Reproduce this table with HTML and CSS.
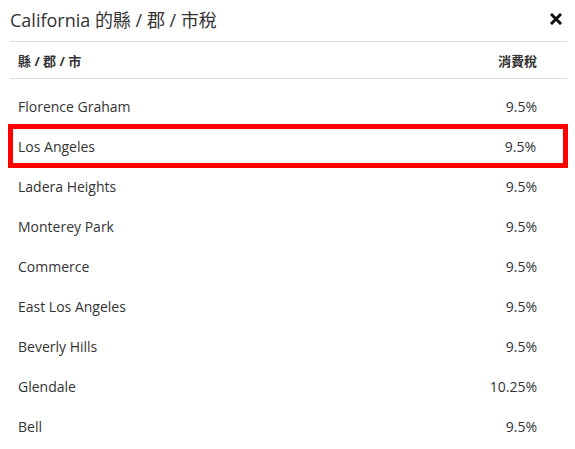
FILE: index.html
```html
<!DOCTYPE html>
<html lang="zh-Hant">

<head>
    <meta charset="UTF-8">
    <meta name="viewport" content="width=device-width, initial-scale=1.0">
    <title>California 的縣 / 郡 / 市稅</title>
    <link rel="stylesheet" href="styles.css">
</head>

<body>
    <div class="modal">
        <!--Title bar-->
        <div class="modal-head">
            <h2>California 的縣 / 郡 / 市稅</h2>
            <button class="close" title="close">
                <svg viewBox="0 0 12 12" width="12" height="12">
                    <path d="M2 2 L10 10 M10 2 L2 10" stroke="#111" stroke-width="3" stroke-linecap="square" />
                </svg>
            </button>
        </div>
        <!--Tax table-->
        <div class="tax-table">
            <div class="row head-row">
                <span>縣 / 郡 / 市</span>
                <span>消費稅</span>
            </div>
            <div class="rows">
                <div class="row"><span>Florence Graham</span><span>9.5%</span></div>
                <div class="row selected"><span>Los Angeles</span><span>9.5%</span></div>
                <div class="row"><span>Ladera Heights</span><span>9.5%</span></div>
                <div class="row"><span>Monterey Park</span><span>9.5%</span></div>
                <div class="row"><span>Commerce</span><span>9.5%</span></div>
                <div class="row"><span>East Los Angeles</span><span>9.5%</span></div>
                <div class="row"><span>Beverly Hills</span><span>9.5%</span></div>
                <div class="row"><span>Glendale</span><span>10.25%</span></div>
                <div class="row"><span>Bell</span><span>9.5%</span></div>
            </div>
        </div>
    </div>
</body>

</html>
```

FILE: styles.css
```css
* {
    margin: 0;
    padding: 0;
    box-sizing: border-box;
    font-family: 'Open Sans', 'Noto Sans CJK TC', sans-serif;
}

body {
    background: #fff;
    color: #333;
}

.modal {
    width: 575px;
    padding: 0 8px 0 10px;
}

.modal-head {
    display: flex;
    justify-content: space-between;
    align-items: center;
    height: 41px;
    padding-bottom: 3px;
}

.modal-head h2 {
    font-size: 18px;
    font-weight: normal;
    color: #333;
}

.close {
    border: none;
    background: none;
    width: 12px;
    height: 12px;
    margin-right: 5px;
    display: flex;
}

.tax-table {
    border-top: 1px solid #ddd;
}

.row {
    display: flex;
    justify-content: space-between;
    align-items: center;
    height: 40px;
    padding: 0 30px 0 8px;
    font-size: 14px;
}

.head-row {
    height: 37px;
    font-size: 13px;
    font-weight: bold;
    border-bottom: 1px solid #ddd;
}

.rows {
    padding-top: 7px;
}

/* highlighted row */
.selected {
    outline: 5px solid #f00;
    outline-offset: -3px;
    margin-right: 1px;
}
```
